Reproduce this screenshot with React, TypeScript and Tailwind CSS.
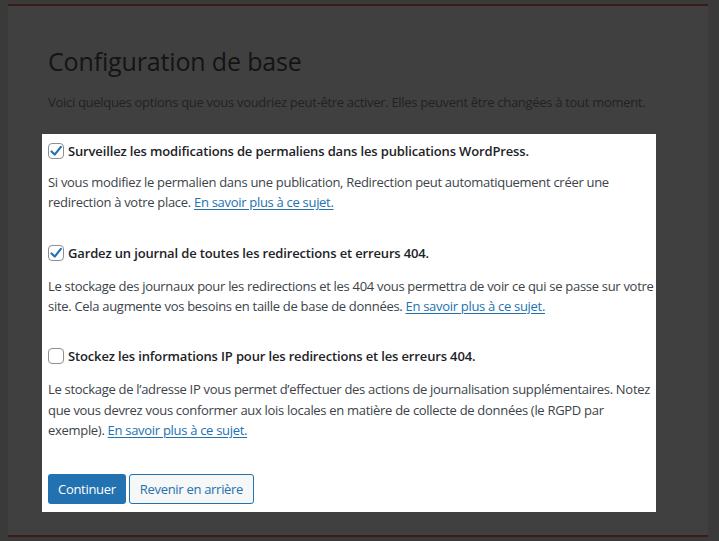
import React from "react";

const Check = ({ checked }: { checked: boolean }) => (
  <span className="relative inline-flex h-4 w-4 shrink-0 items-center justify-center rounded-[4px] border border-[#8c8f94] bg-white">
    {checked && (
      <svg viewBox="0 0 20 20" className="absolute left-[-2px] top-[-2px] h-[18px] w-[18px]">
        <path d="M5 10.5 L8.6 14 L15.4 5.4" fill="none" stroke="#2271b1" strokeWidth="2.4" strokeLinecap="round" strokeLinejoin="round" />
      </svg>
    )}
  </span>
);

const Link = () => (
  <a className="text-[#2271b1] underline underline-offset-2">En savoir plus à ce sujet.</a>
);

export default function App() {
  return (
    <div
      className="h-[541px] w-[719px] overflow-hidden bg-[#3a3a3a]"
      style={{ fontFamily: '"Open Sans", "Noto Sans", sans-serif' }}
    >
      <div className="ml-[8px] mt-[4px] flex h-[533px] w-[700px] flex-col border-y-2 border-[#3b1b16] bg-[#404040]">
        <h1 className="ml-[40px] mt-[39px] text-[25px] leading-[32px] font-normal tracking-[-0.15px] text-[#141414]">
          Configuration de base
        </h1>
        <p className="ml-[40px] mt-[15px] text-[13px] leading-[20px] tracking-[-0.3px] text-[#222222]">
          Voici quelques options que vous voudriez peut-être activer. Elles peuvent être changées à tout moment.
        </p>
        <div className="ml-[34px] mt-[22px] w-[614px] bg-white pl-[6px] pr-[1px] pt-[6px] pb-[8px] text-[13px] leading-[20px] tracking-[-0.3px] text-[#3c434a]">
          <div className="flex items-center gap-[4px] py-[1px]">
            <Check checked />
            <span className="font-semibold tracking-[-0.15px] text-[#1d2327]">
              Surveillez les modifications de permaliens dans les publications WordPress.
            </span>
          </div>
          <p className="mt-[11px] leading-[19.5px]">
            Si vous modifiez le permalien dans une publication, Redirection peut automatiquement créer une redirection à votre place. <Link />
          </p>
          <div className="mt-[30px] flex items-center gap-[4px] py-[1px]">
            <Check checked />
            <span className="font-semibold tracking-[-0.15px] text-[#1d2327]">
              Gardez un journal de toutes les redirections et erreurs 404.
            </span>
          </div>
          <p className="mt-[12px]">
            Le stockage des journaux pour les redirections et les 404 vous permettra de voir ce qui se passe sur votre site. Cela augmente vos besoins en taille de base de données. <Link />
          </p>
          <div className="mt-[29px] flex items-center gap-[4px] py-[1px]">
            <Check checked={false} />
            <span className="font-semibold tracking-[-0.15px] text-[#1d2327]">
              Stockez les informations IP pour les redirections et les erreurs 404.
            </span>
          </div>
          <p className="mt-[12px] leading-[20.5px]">
            Le stockage de l’adresse IP vous permet d’effectuer des actions de journalisation supplémentaires. Notez que vous devrez vous conformer aux lois locales en matière de collecte de données (le RGPD par exemple). <Link />
          </p>
          <div className="mt-[33px] flex gap-[3px]">
            <button className="h-[30px] rounded-[3px] bg-[#2271b1] px-[10px] text-[13px] text-white">
              Continuer
            </button>
            <button className="h-[30px] rounded-[3px] border border-[#2271b1] bg-[#f6f7f7] px-[10px] text-[13px] text-[#2271b1]">
              Revenir en arrière
            </button>
          </div>
        </div>
      </div>
    </div>
  );
}
